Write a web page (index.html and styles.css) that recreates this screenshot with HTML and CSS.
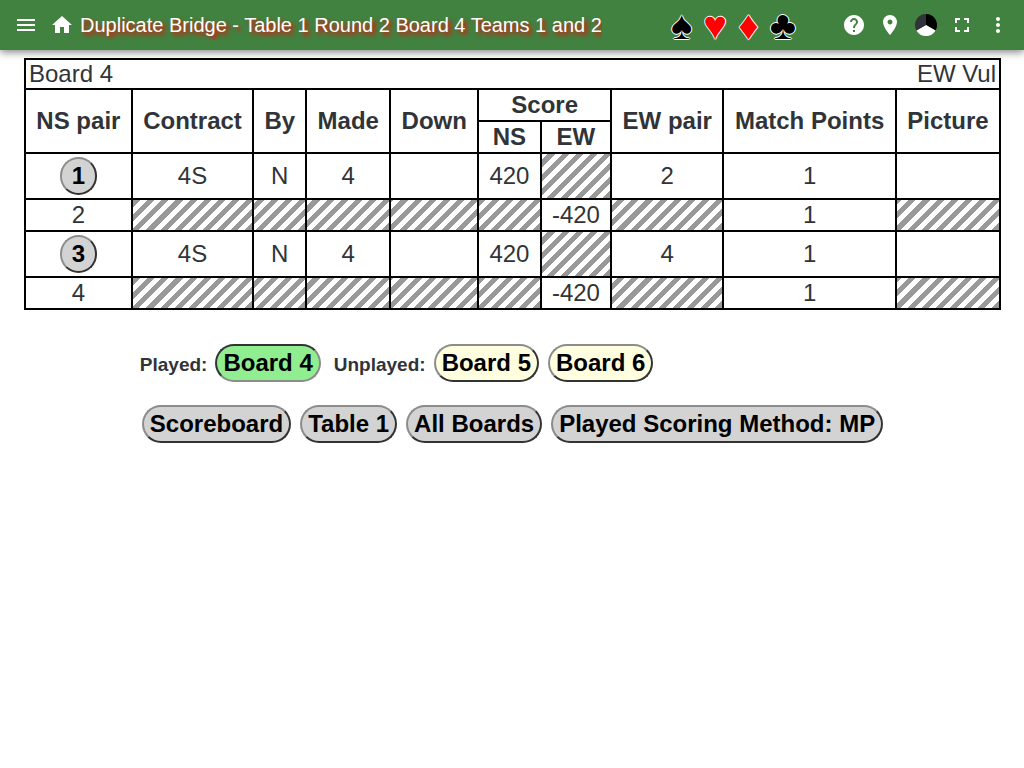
FILE: index.html
```html
<!DOCTYPE html>
<html lang="en">
<head>
<meta charset="utf-8">
<meta name="viewport" content="width=device-width, initial-scale=1">
<title>Duplicate Bridge</title>
<link rel="stylesheet" href="styles.css">
</head>
<body>
<header class="toolbar">
  <button class="icon-button" aria-label="Menu"><svg viewBox="0 0 24 24"><path d="M3 18h18v-2H3v2zm0-5h18v-2H3v2zm0-7v2h18V6H3z"/></svg></button>
  <button class="icon-button" aria-label="Home"><svg viewBox="0 0 24 24"><path d="M10 20v-6h4v6h5v-8h3L12 3 2 12h3v8z"/></svg></button>
  <h1 class="title">Duplicate Bridge - Table 1 Round 2 Board 4 Teams 1 and 2</h1>
  <div class="suits">♠ <span class="red">♥ ♦</span> ♣</div>
  <div class="actions">
    <button class="icon-button" aria-label="Help"><svg viewBox="0 0 24 24"><path d="M12 2C6.48 2 2 6.48 2 12s4.480 10 10 10 10-4.480 10-10S17.520 2 12 2zm1 17h-2v-2h2v2zm2.070-7.750l-.9.920C13.450 12.900 13 13.500 13 15h-2v-.5c0-1.100.45-2.100 1.170-2.830l1.240-1.260c.37-.36.59-.86.59-1.410 0-1.100-.9-2-2-2s-2 .9-2 2H8c0-2.210 1.790-4 4-4s4 1.790 4 4c0 .88-.36 1.680-.93 2.250z"/></svg></button>
    <button class="icon-button" aria-label="Location"><svg viewBox="0 0 24 24"><path d="M12 2C8.130 2 5 5.130 5 9c0 5.250 7 13 7 13s7-7.750 7-13c0-3.870-3.130-7-7-7zm0 9.500c-1.380 0-2.500-1.120-2.500-2.500s1.120-2.500 2.500-2.500 2.500 1.120 2.500 2.500-1.120 2.500-2.500 2.500z"/></svg></button>
    <button class="icon-button" aria-label="Theme"><svg viewBox="0 0 24 24"><path fill="#000" d="M12 12V1a11 11 0 0 1 9.530 16.500z"/><path fill="#fff" d="M12 12l9.530 5.500a11 11 0 0 1-19.060 0z"/><path fill="#303438" d="M12 12L2.470 17.500A11 11 0 0 1 12 1z"/></svg></button>
    <button class="icon-button" aria-label="Full screen"><svg viewBox="0 0 24 24"><path d="M7 14H5v5h5v-2H7v-3zm-2-4h2V7h3V5H5v5zm12 7h-3v2h5v-5h-2v3zM14 5v2h3v3h2V5h-5z"/></svg></button>
    <button class="icon-button" aria-label="More"><svg viewBox="0 0 24 24"><path d="M12 8c1.100 0 2-.9 2-2s-.9-2-2-2-2 .9-2 2 .9 2 2 2zm0 2c-1.100 0-2 .9-2 2s.9 2 2 2 2-.9 2-2-.9-2-2-2zm0 6c-1.100 0-2 .9-2 2s.9 2 2 2 2-.9 2-2-.9-2-2-2z"/></svg></button>
  </div>
</header>
<main class="content">
  <table class="board">
    <tbody>
      <tr><td class="summary" colspan="10"><div class="summary-line"><span>Board 4</span><span>EW Vul</span></div></td></tr>
      <tr>
        <th rowspan="2">NS pair</th><th rowspan="2">Contract</th><th rowspan="2">By</th><th rowspan="2">Made</th><th rowspan="2">Down</th>
        <th colspan="2">Score</th>
        <th rowspan="2">EW pair</th><th rowspan="2">Match Points</th><th rowspan="2">Picture</th>
      </tr>
      <tr><th>NS</th><th>EW</th></tr>
      <tr class="entry">
        <td><button class="pill round">1</button></td><td>4S</td><td>N</td><td>4</td><td></td><td>420</td><td class="hatched"></td><td>2</td><td>1</td><td></td>
      </tr>
      <tr>
        <td>2</td><td class="hatched"></td><td class="hatched"></td><td class="hatched"></td><td class="hatched"></td><td class="hatched"></td><td>-420</td><td class="hatched"></td><td>1</td><td class="hatched"></td>
      </tr>
      <tr class="entry">
        <td><button class="pill round">3</button></td><td>4S</td><td>N</td><td>4</td><td></td><td>420</td><td class="hatched"></td><td>4</td><td>1</td><td></td>
      </tr>
      <tr>
        <td>4</td><td class="hatched"></td><td class="hatched"></td><td class="hatched"></td><td class="hatched"></td><td class="hatched"></td><td>-420</td><td class="hatched"></td><td>1</td><td class="hatched"></td>
      </tr>
    </tbody>
  </table>
  <div class="controls">
    <div class="boards">
      <div class="group"><span class="label">Played:</span><button class="pill played">Board 4</button></div>
      <div class="group"><span class="label">Unplayed:</span><div class="pills"><button class="pill unplayed">Board 5</button><button class="pill unplayed">Board 6</button></div></div>
    </div>
    <div class="pills links">
      <button class="pill">Scoreboard</button><button class="pill">Table 1</button><button class="pill">All Boards</button><button class="pill">Played Scoring Method: MP</button>
    </div>
  </div>
</main>
</body>
</html>
```
FILE: styles.css
```css
* {
  box-sizing: border-box;
}

body {
  margin: 0;
  background: #fff;
  color: #303438;
  font-family: "Liberation Sans", Arial, sans-serif;
  font-size: 24px;
  line-height: 28px;
}

button {
  font: inherit;
  cursor: pointer;
}

.toolbar {
  display: flex;
  align-items: center;
  height: 50px;
  padding: 0 8px;
  background: #418241;
  color: #fff;
  box-shadow: 0 2px 8px rgba(0, 0, 0, 0.5);
}

.icon-button {
  display: flex;
  flex: none;
  align-items: center;
  justify-content: center;
  width: 36px;
  height: 36px;
  padding: 0;
  border: 0;
  background: none;
  color: inherit;
}

.icon-button svg {
  width: 24px;
  height: 24px;
  fill: currentColor;
}

.title {
  margin: 0;
  overflow: hidden;
  font-size: 20px;
  font-weight: 400;
  line-height: 30px;
  white-space: nowrap;
  text-overflow: ellipsis;
  text-shadow: 3px 3px 4px #f00;
}

.suits {
  flex: none;
  margin: 0 40px 0 auto;
  color: #000;
  font-size: 40px;
  line-height: 50px;
  text-shadow: 1px 0 #fff, -1px 0 #fff, 0 1px #fff, 0 -1px #fff;
}

.suits .red {
  color: #f00;
}

.actions {
  display: flex;
  flex: none;
}

.content {
  padding: 8px 23px 24px 24px;
}

.board {
  width: 100%;
  border-collapse: collapse;
}

.board th,
.board td {
  padding: 1px 10px;
  border: 2px solid #000;
  text-align: center;
}

.board .summary {
  padding: 0 3px;
}

.summary-line {
  display: flex;
  justify-content: space-between;
}

.board .entry td {
  padding-top: 3px;
  padding-bottom: 3px;
}

.board .hatched {
  background: repeating-linear-gradient(-45deg, #999 0 5px, #fff 5px 10px);
}

.pill {
  height: 38px;
  padding: 0 6px;
  border: 2px solid;
  border-color: #8c8c8c #333 #333 #8c8c8c;
  border-radius: 19px;
  background: #d3d3d3;
  color: #000;
  font-weight: 700;
}

.round {
  display: block;
  margin: 0 auto;
  padding: 0 10px;
}

.played {
  border-color: #333 #8c8c8c #8c8c8c #333;
  background: #90ee90;
}

.unplayed {
  background: #ffffe0;
}

.controls {
  display: flex;
  flex-direction: column;
  gap: 23px;
  width: fit-content;
  margin: 34px auto 0;
}

.boards,
.group,
.pills {
  display: flex;
  flex-wrap: wrap;
  align-items: baseline;
}

.boards {
  gap: 13px;
}

.group {
  gap: 8px;
}

.pills {
  gap: 9px;
}

.links {
  padding: 0 2px;
}

.label {
  font-size: 19px;
  font-weight: 700;
}
```
